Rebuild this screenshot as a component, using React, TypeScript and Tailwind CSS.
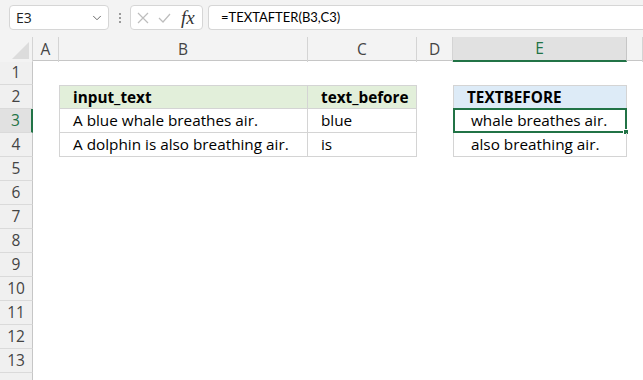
import { ChevronDown } from "lucide-react";

const cols = ["A", "B", "C", "D", "E", "F"];
const rows = [1, 2, 3, 4, 5, 6, 7, 8, 9, 10, 11, 12, 13, 14];

const cellFont = "font-['Open_Sans','Noto_Sans',sans-serif] text-[15.3px] text-black";

function Cell({ r, c }: { r: number; c: string }) {
  let cls = "relative flex items-center overflow-visible whitespace-nowrap";
  let text = "";
  const inTable = (c === "B" || c === "C") && r >= 2 && r <= 4;
  const inE = c === "E" && r >= 2 && r <= 4;

  if (inTable) {
    cls += " border-[#d4d4d4] border-b border-r";
    if (c === "B") cls += " border-l";
    if (r === 2) cls += " border-t bg-[#e2efda] font-bold";
  }
  if (inE) {
    cls += " border-[#d4d4d4] border-b border-r border-l";
    if (r === 2) cls += " border-t bg-[#ddebf7] font-bold";
  }

  if (c === "B") {
    if (r === 2) text = "input_text";
    if (r === 3) text = "A blue whale breathes air.";
    if (r === 4) text = "A dolphin is also breathing air.";
  }
  if (c === "C") {
    if (r === 2) text = "text_before";
    if (r === 3) text = "blue";
    if (r === 4) text = "is";
  }
  if (c === "E") {
    if (r === 2) text = "TEXTBEFORE";
    if (r === 3) text = " whale breathes air.";
    if (r === 4) text = " also breathing air.";
  }

  return (
    <div className={cls}>
      {text && <span className={`${cellFont} whitespace-pre pl-[13px]`}>{text}</span>}
      {c === "E" && r === 3 && (
        <>
          <div className="absolute -left-px -top-px -right-px -bottom-px border-2 border-[#217346]" />
          <div className="absolute -right-[3px] -bottom-[3px] w-[6px] h-[6px] bg-[#217346] border border-white" />
        </>
      )}
    </div>
  );
}

export default function App() {
  return (
    <div className="w-[643px] h-[380px] overflow-hidden bg-white font-['Open_Sans','Noto_Sans',sans-serif]">
      {/* formula bar */}
      <div className="h-[37px] bg-[#f3f3f3] flex items-start pt-[5px] pl-[9px]">
        <div className="w-[100px] h-[25px] bg-white border border-[#d6d6d6] rounded-[4px] flex items-center justify-between pl-[6px] pr-[4px]">
          <span className="text-[14px] text-[#222]">E3</span>
          <ChevronDown size={14} strokeWidth={1.5} className="text-[#555]" />
        </div>
        <div className="w-[21px] h-[25px] flex flex-col items-center justify-center gap-[2px]">
          <span className="w-[2px] h-[2px] bg-[#9a9a9a]" />
          <span className="w-[2px] h-[2px] bg-[#9a9a9a]" />
          <span className="w-[2px] h-[2px] bg-[#9a9a9a]" />
        </div>
        <div className="w-[73px] h-[25px] bg-white border border-[#d6d6d6] rounded-[4px] flex items-center pl-[6px] gap-[9px]">
          <svg width="12" height="12" viewBox="0 0 12 12" className="text-[#bdbdbd]">
            <path d="M1 1 L11 11 M11 1 L1 11" stroke="currentColor" strokeWidth="1.2" fill="none" />
          </svg>
          <svg width="13" height="10" viewBox="0 0 13 10" className="text-[#bdbdbd]">
            <path d="M1 5 L5 9 L12 1" stroke="currentColor" strokeWidth="1.2" fill="none" />
          </svg>
          <span className="font-['Liberation_Serif',serif] italic text-[19px] text-[#333] leading-none ml-[1px]">fx</span>
        </div>
        <div className="flex-1 ml-[5px] h-[25px] bg-white border border-[#d6d6d6] border-r-0 rounded-l-[4px] flex items-center pl-[12px]">
          <span className="font-['Lato','Liberation_Sans',sans-serif] text-[13px] text-black">=TEXTAFTER(B3,C3)</span>
        </div>
      </div>

      {/* column headers */}
      <div className="grid grid-cols-[33px_26px_249px_109px_36px_174px_1fr] h-[24px] bg-[#f3f3f3] border-b border-[#c6c6c6]">
        <div className="relative border-r border-[#d4d4d4] bg-[#f3f3f3]">
          <div className="absolute right-[3px] bottom-[3px] w-0 h-0 border-l-[17px] border-l-transparent border-b-[17px] border-b-[#dcdcdc]" />
        </div>
        {cols.map((c) => (
          <div
            key={c}
            className={`flex items-center justify-center text-[15.5px] border-r ${
              c === "E"
                ? "bg-[#e1e1e1] text-[#217346] border-[#c6c6c6] border-b-2 border-b-[#217346]"
                : "text-[#444] border-[#d4d4d4]"
            }`}
          >
            {c === "F" ? "" : c}
          </div>
        ))}
      </div>

      {/* sheet */}
      <div className="grid grid-cols-[33px_26px_249px_109px_36px_174px_1fr] auto-rows-[24px]">
        {rows.map((r) => (
          <div key={r} className="contents">
            <div
              className={`flex items-center justify-center text-[15.5px] border-b border-[#dadada] ${
                r === 3
                  ? "bg-[#e1e1e1] text-[#217346] border-r-2 border-r-[#217346]"
                  : "bg-[#f0f0f0] text-[#444] border-r border-r-[#c6c6c6]"
              }`}
            >
              {r === 14 ? "" : r}
            </div>
            {cols.map((c) => (
              <Cell key={c} r={r} c={c} />
            ))}
          </div>
        ))}
      </div>
    </div>
  );
}
